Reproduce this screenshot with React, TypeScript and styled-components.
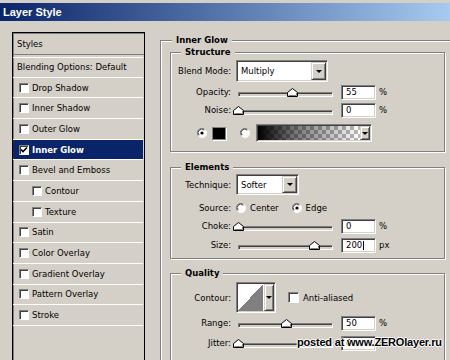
import React from "react";
import styled, { createGlobalStyle } from "styled-components";

const GlobalStyle = createGlobalStyle`
  html, body {
    margin: 0;
    padding: 0;
    background: #d4d0c8;
  }
  body {
    font-family: "DejaVu Sans", Tahoma, sans-serif;
    font-size: 8.5px;
    color: #000;
  }
`;

const Window = styled.div`
  position: relative;
  width: 450px;
  height: 360px;
  box-sizing: border-box;
  padding-top: 3px;
  overflow: hidden;
  background: #d4d0c8;
`;

const TitleBar = styled.div`
  height: 18px;
  display: flex;
  align-items: center;
  padding-left: 3px;
  background: linear-gradient(90deg, #0a246a 0%, #a6caf0 100%);
  color: #fff;
  font: bold 11px "Liberation Sans", Arial, sans-serif;
`;

const Main = styled.div`
  display: flex;
  align-items: flex-start;
  gap: 15px;
  padding: 11px 0 0 12px;
`;

const StyleList = styled.div`
  width: 133px;
  height: 340px;
  flex-shrink: 0;
  box-sizing: border-box;
  border: 1px solid #000;
  box-shadow: inset 1px 1px 0 #808080;
  padding-top: 1px;
`;

const ListHeader = styled.div`
  height: 21px;
  box-sizing: border-box;
  display: flex;
  align-items: center;
  padding-left: 4px;
  border-bottom: 1px solid #808080;
  margin-bottom: 2px;
`;

const ListRow = styled.div<{ $indent?: boolean; $active?: boolean; $plain?: boolean }>`
  height: 20.7px;
  box-sizing: border-box;
  display: flex;
  align-items: center;
  gap: 3px;
  padding-left: ${({ $indent, $plain }) => ($plain ? 4 : $indent ? 19 : 6)}px;
  margin-right: 1px;
  border-bottom: 1px solid #fff;
  background: ${({ $active }) => ($active ? "#0a246a" : "transparent")};
  color: ${({ $active }) => ($active ? "#fff" : "#000")};
  font-weight: ${({ $active }) => ($active ? "bold" : "normal")};
`;

const CheckBox = styled.span<{ $size?: number }>`
  width: ${({ $size }) => $size ?? 10}px;
  height: ${({ $size }) => $size ?? 10}px;
  flex-shrink: 0;
  box-sizing: border-box;
  display: flex;
  align-items: center;
  justify-content: center;
  background: #fff;
  border: 1px solid;
  border-color: #808080 #fff #fff #808080;
  box-shadow: inset 1px 1px 0 #404040;
`;

const Options = styled.div`
  width: 295px;
  flex-shrink: 0;
  padding-top: 8px;
`;

const Group = styled.div<{ $outer?: boolean; $mt?: number; $pb?: number }>`
  display: flex;
  flex-direction: column;
  box-sizing: border-box;
  margin-top: ${({ $mt }) => $mt ?? 0}px;
  padding: 0 0 ${({ $pb }) => $pb ?? 0}px ${({ $outer }) => ($outer ? 9 : 0)}px;
  width: ${({ $outer }) => ($outer ? 295 : 275)}px;
  min-height: ${({ $outer }) => ($outer ? 330 : 0)}px;
  border: 1px solid #808080;
  box-shadow: inset 1px 1px 0 #fff, 1px 1px 0 #fff;
`;

const Caption = styled.div<{ $indent: number }>`
  align-self: flex-start;
  margin: -7px 0 0 ${({ $indent }) => $indent}px;
  padding: 0 4px;
  line-height: 12px;
  font-weight: bold;
  background: #d4d0c8;
`;

const FormRow = styled.div<{ $h: number; $mt: number; $pl?: number }>`
  display: flex;
  align-items: center;
  height: ${({ $h }) => $h}px;
  margin-top: ${({ $mt }) => $mt}px;
  padding-left: ${({ $pl }) => $pl ?? 0}px;
`;

const FieldLabel = styled.span`
  width: 60px;
  flex-shrink: 0;
  margin-right: 5px;
  text-align: right;
  white-space: nowrap;
`;

const Sunken = styled.div<{ $w: number; $h: number }>`
  width: ${({ $w }) => $w}px;
  height: ${({ $h }) => $h}px;
  flex-shrink: 0;
  box-sizing: border-box;
  display: flex;
  align-items: stretch;
  padding: 1px;
  background: #fff;
  border: 1px solid;
  border-color: #808080 #fff #fff #808080;
  box-shadow: inset 1px 1px 0 #404040, inset -1px -1px 0 #d4d0c8;
`;

const FieldText = styled.span`
  flex: 1;
  display: flex;
  align-items: center;
  padding-left: 3px;
  white-space: nowrap;
`;

const Caret = styled.span`
  width: 1px;
  height: 9px;
  margin-left: 1px;
  background: #000;
`;

const DropButton = styled.span<{ $w?: number }>`
  width: ${({ $w }) => $w ?? 15}px;
  flex-shrink: 0;
  box-sizing: border-box;
  display: flex;
  align-items: center;
  justify-content: center;
  background: #d4d0c8;
  border: 1px solid;
  border-color: #d4d0c8 #404040 #404040 #d4d0c8;
  box-shadow: inset 1px 1px 0 #fff, inset -1px -1px 0 #808080;

  &::after {
    content: "";
    border-left: 3px solid transparent;
    border-right: 3px solid transparent;
    border-top: 3px solid #000;
  }
`;

const Slider = styled.div`
  position: relative;
  width: 95px;
  height: 9px;
  margin: 1px 0 0 2px;
  flex-shrink: 0;
  box-sizing: border-box;
  padding-top: 4px;
`;

const Track = styled.div`
  height: 5px;
  box-sizing: border-box;
  border: 1px solid;
  border-color: #808080 #fff #fff #808080;
  box-shadow: inset 1px 1px 0 #404040;
  background: #d4d0c8;
`;

const Thumb = styled.svg`
  position: absolute;
  top: 0;
  margin-left: -5px;
`;

const NumberBox = styled(Sunken)`
  margin-left: 8px;
`;

const Unit = styled.span`
  margin-left: 3px;
`;

const Swatch = styled.span`
  width: 14px;
  height: 13px;
  box-sizing: border-box;
  margin: 0 14px 0 5px;
  background: #000;
  border: 1px solid #808080;
  box-shadow: 1px 1px 0 #fff;
`;

const GradientPreview = styled.span`
  flex: 1;
  background: linear-gradient(90deg, #000 0%, rgba(0, 0, 0, 0.55) 35%, rgba(0, 0, 0, 0) 100%),
    repeating-conic-gradient(#b8b8b8 0% 25%, #ffffff 0% 50%) 0 0 / 8px 8px;
`;

const ContourPreview = styled.span`
  flex: 1;
  margin-right: 1px;
  background: linear-gradient(to bottom right, #fff 50%, #808080 50%);
`;

const RadioLabel = styled.span<{ $mr?: number }>`
  margin: 0 ${({ $mr }) => $mr ?? 0}px 0 4px;
`;

const Watermark = styled.div`
  position: absolute;
  left: 297px;
  top: 336px;
  font: bold 11px "Liberation Sans", Arial, sans-serif;
  letter-spacing: -0.2px;
  color: #000;
  text-shadow: 1px 0 0 #fff, -1px 0 0 #fff, 0 1px 0 #fff, 0 -1px 0 #fff;
  white-space: nowrap;
`;

const Check = () => (
  <svg width="8" height="8" viewBox="0 0 8 8">
    <path d="M1 3.5 L3 5.5 L7 1.5" fill="none" stroke="#000" strokeWidth="1.6" />
  </svg>
);

const Radio = ({ on }: { on?: boolean }) => (
  <svg width="10" height="10" viewBox="0 0 10 10" style={{ flexShrink: 0 }}>
    <circle cx="5" cy="5" r="4.5" fill="#fff" />
    <path d="M1.2 7.5 A4.5 4.5 0 0 1 7.5 1.2" fill="none" stroke="#808080" />
    <path d="M2.2 7.2 A3.5 3.5 0 0 1 7.2 2.2" fill="none" stroke="#404040" />
    <path d="M8.8 2.5 A4.5 4.5 0 0 1 2.5 8.8" fill="none" stroke="#fff" />
    {on && <circle cx="5" cy="5" r="1.6" fill="#000" />}
  </svg>
);

const RangeSlider = ({ value }: { value: number }) => (
  <Slider>
    <Track />
    <Thumb width="11" height="9" viewBox="0 0 11 9" style={{ left: `${value}%` }}>
      <polygon points="0.5,8.5 0.5,4.5 5.5,0.5 10.5,4.5 10.5,8.5" fill="#fff" stroke="#000" />
      <polyline points="1.5,7.5 9.5,7.5 9.5,5" fill="none" stroke="#808080" />
    </Thumb>
  </Slider>
);

const items = [
  { label: "Drop Shadow" },
  { label: "Inner Shadow" },
  { label: "Outer Glow" },
  { label: "Inner Glow", checked: true },
  { label: "Bevel and Emboss" },
  { label: "Contour", indent: true },
  { label: "Texture", indent: true },
  { label: "Satin" },
  { label: "Color Overlay" },
  { label: "Gradient Overlay" },
  { label: "Pattern Overlay" },
  { label: "Stroke" },
];

const SliderRow = ({
  label,
  value,
  text,
  unit,
  mt,
  caret,
}: {
  label: string;
  value: number;
  text: string;
  unit: string;
  mt: number;
  caret?: boolean;
}) => (
  <FormRow $h={16} $mt={mt}>
    <FieldLabel>{label}</FieldLabel>
    <RangeSlider value={value} />
    <NumberBox $w={35} $h={15}>
      <FieldText>
        {text}
        {caret && <Caret />}
      </FieldText>
    </NumberBox>
    <Unit>{unit}</Unit>
  </FormRow>
);

export default function App() {
  return (
    <>
      <GlobalStyle />
      <Window>
        <TitleBar>Layer Style</TitleBar>
        <Main>
          <StyleList>
            <ListHeader>Styles</ListHeader>
            <ListRow $plain style={{ borderTop: "1px solid #fff" }}>
              Blending Options: Default
            </ListRow>
            {items.map((it) => (
              <ListRow key={it.label} $indent={it.indent} $active={it.checked}>
                <CheckBox>{it.checked && <Check />}</CheckBox>
                {it.label}
              </ListRow>
            ))}
          </StyleList>

          <Options>
            <Group $outer>
              <Caption $indent={2}>Inner Glow</Caption>

              <Group $mt={6} $pb={9}>
                <Caption $indent={10}>Structure</Caption>
                <FormRow $h={22} $mt={2}>
                  <FieldLabel>Blend Mode:</FieldLabel>
                  <Sunken $w={92} $h={22}>
                    <FieldText>Multiply</FieldText>
                    <DropButton />
                  </Sunken>
                </FormRow>
                <SliderRow label="Opacity:" value={57} text="55" unit="%" mt={2} />
                <SliderRow label="Noise:" value={0} text="0" unit="%" mt={2} />
                <FormRow $h={18} $mt={6} $pl={26}>
                  <Radio on />
                  <Swatch />
                  <Radio />
                  <Sunken $w={116} $h={18} style={{ marginLeft: 6 }}>
                    <GradientPreview />
                    <DropButton $w={10} />
                  </Sunken>
                </FormRow>
              </Group>

              <Group $mt={15} $pb={5}>
                <Caption $indent={10}>Elements</Caption>
                <FormRow $h={21} $mt={1}>
                  <FieldLabel>Technique:</FieldLabel>
                  <Sunken $w={63} $h={21}>
                    <FieldText>Softer</FieldText>
                    <DropButton />
                  </Sunken>
                </FormRow>
                <FormRow $h={16} $mt={5}>
                  <FieldLabel>Source:</FieldLabel>
                  <Radio />
                  <RadioLabel $mr={13}>Center</RadioLabel>
                  <Radio on />
                  <RadioLabel>Edge</RadioLabel>
                </FormRow>
                <SliderRow label="Choke:" value={0} text="0" unit="%" mt={2} />
                <SliderRow label="Size:" value={80} text="200" unit="px" mt={3} caret />
              </Group>

              <Group $mt={14} $pb={20}>
                <Caption $indent={10}>Quality</Caption>
                <FormRow $h={31} $mt={3}>
                  <FieldLabel>Contour:</FieldLabel>
                  <Sunken $w={40} $h={31}>
                    <ContourPreview />
                    <DropButton $w={10} />
                  </Sunken>
                  <CheckBox style={{ marginLeft: 12 }} $size={11} />
                  <RadioLabel>Anti-aliased</RadioLabel>
                </FormRow>
                <SliderRow label="Range:" value={50} text="50" unit="%" mt={2} />
                <SliderRow label="Jitter:" value={0} text="0" unit="%" mt={4} />
              </Group>
            </Group>
          </Options>
        </Main>
        <Watermark>posted at www.ZEROlayer.ru</Watermark>
      </Window>
    </>
  );
}
